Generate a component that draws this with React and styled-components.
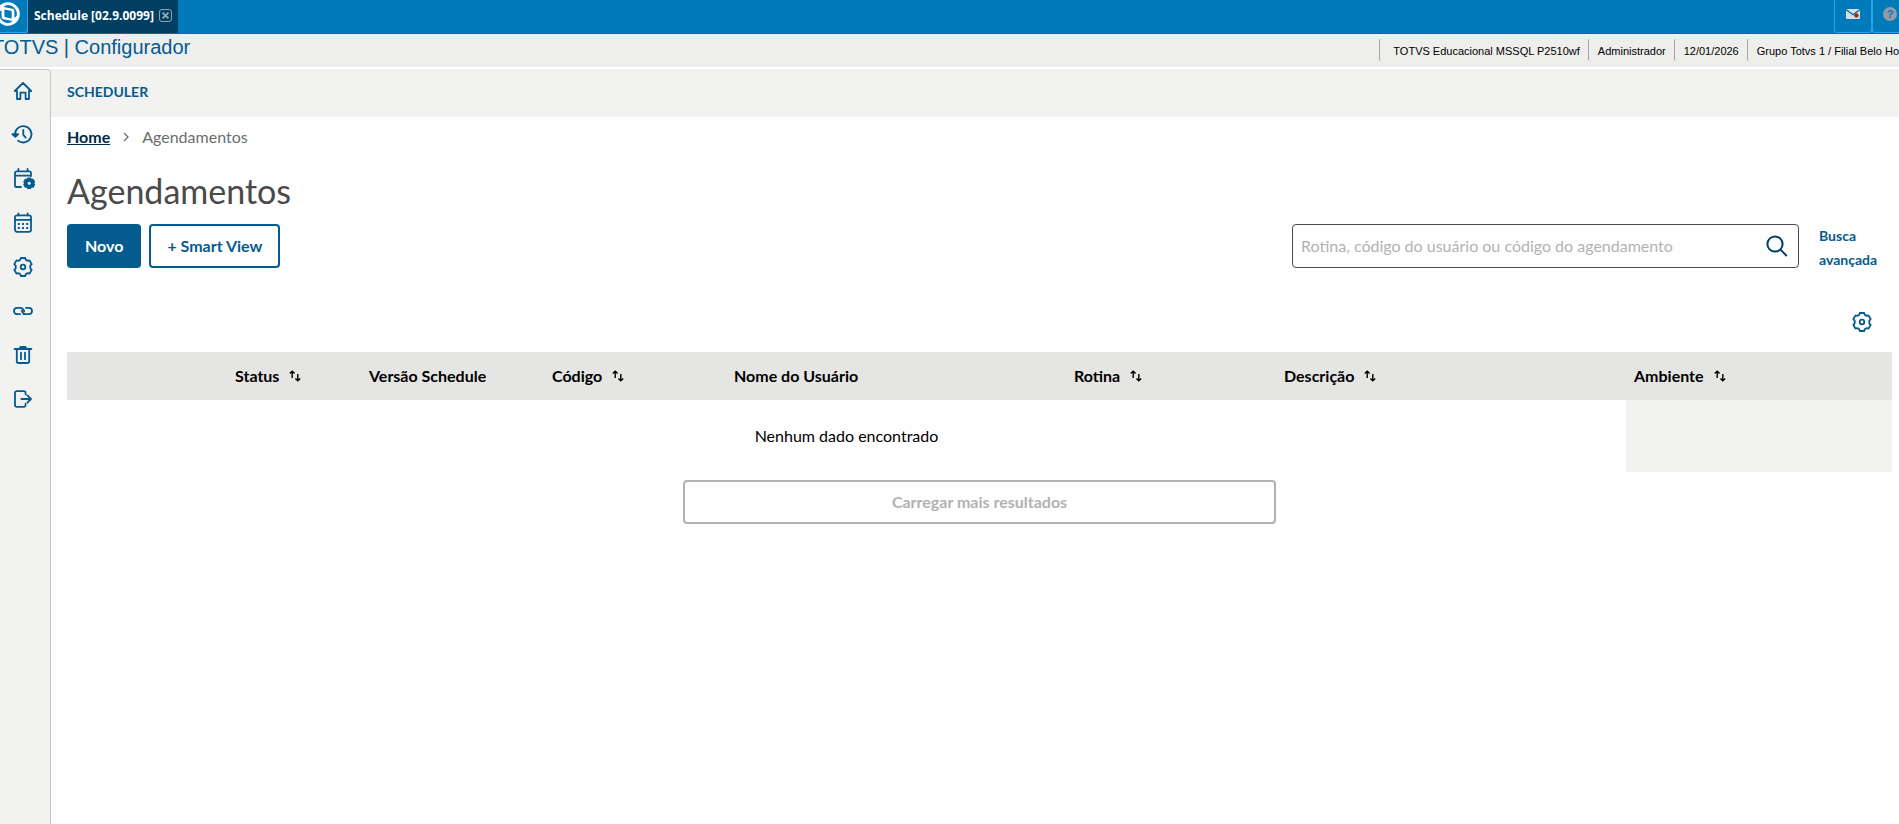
import React from "react";
import styled, { createGlobalStyle } from "styled-components";

const GEAR =
	"M7.8 1h4.4l.5 1.8 1.9 1.1 1.9-.5 2.2 3.8-1.4 1.5v2.6l1.4 1.5-2.2 3.8-1.9-.5-1.9 1.1-.5 1.8H7.8l-.5-1.8-1.9-1.1-1.9.5-2.2-3.8 1.4-1.5V8.7L1.3 7.2l2.2-3.8 1.9.5 1.9-1.1z";

const menuItems = [
	{
		label: "Home",
		icon: <path d="M1.8 10 10 2l8.2 8H16v8h-3.4v-6.4H7.4V18H4v-8z" />,
	},
	{
		label: "Histórico",
		icon: (
			<>
				<path d="M2.2 11A8.2 8.2 0 1 1 5 15.6" />
				<path d="M-.6 9.2l3 2.6 2.8-2.6z" fill="currentColor" />
				<path d="M10.3 5v4.8l2.4 2.8" />
			</>
		),
	},
	{
		label: "Agendamentos",
		icon: (
			<>
				<path d="M18 7V4a1.6 1.6 0 0 0-1.6-1.6H3.6A1.6 1.6 0 0 0 2 4v12.4A1.6 1.6 0 0 0 3.6 18H8M2 6.6h16M5.4 0v2.4M14.6 0v2.4" />
				<path
					fill="currentColor"
					strokeWidth="1.6"
					d="M14.8 9.4h2.8l.5 1.5 1.8-.4 1.4 2.4-1.1 1.3 1.1 1.4-1.4 2.4-1.8-.4-.5 1.5h-2.8l-.5-1.5-1.8.4-1.4-2.4 1.1-1.4-1.1-1.3 1.4-2.4 1.8.4z"
				/>
				<circle cx="16.2" cy="14.2" r="1.5" fill="#f2f2f0" stroke="none" />
			</>
		),
	},
	{
		label: "Calendário",
		icon: (
			<>
				<rect x="2" y="2.4" width="16" height="16.4" rx="2" />
				<path d="M2 6.8h16M5.4.4v2M14.6.4v2" />
				<path
					strokeWidth="2"
					strokeLinecap="butt"
					d="M4.8 11h2M9 11h2M13.2 11h2M4.8 15h2M9 15h2M13.2 15h2"
				/>
			</>
		),
	},
	{
		label: "Configurações",
		icon: (
			<>
				<path d={GEAR} />
				<circle cx="10" cy="10" r="2.3" />
			</>
		),
	},
	{
		label: "Vínculos",
		icon: (
			<>
				<path d="M7 13.2H4.2a3.2 3.2 0 0 1 0-6.4h3.4a3.2 3.2 0 0 1 3 2.1l.6 1.6" />
				<path d="M13 6.8h2.8a3.2 3.2 0 0 1 0 6.4h-3.4a3.2 3.2 0 0 1-3-2.1l-.6-1.6" />
			</>
		),
	},
	{
		label: "Excluir",
		icon: (
			<>
				<path d="M1.6 4h16.8M3.8 4v12.2A1.8 1.8 0 0 0 5.6 18h8.8a1.8 1.8 0 0 0 1.8-1.8V4" />
				<path d="M6.6 3.6l1.2-1.8h4.4l1.2 1.8z" fill="currentColor" />
				<path d="M8 7.6v6.6M12 7.6v6.6" />
			</>
		),
	},
	{
		label: "Sair",
		icon: (
			<>
				<path d="M12.6 5.4V4A1.8 1.8 0 0 0 10.8 2.2h-7A1.8 1.8 0 0 0 2 4v12a1.8 1.8 0 0 0 1.8 1.8h7a1.8 1.8 0 0 0 1.8-1.8v-1.4" />
				<path d="M8.4 10h9.4M14.4 6.4L18 10l-3.6 3.6" />
			</>
		),
	},
];

const columns = [
	{ label: "", width: 160 },
	{ label: "Status", width: 134, sortable: true },
	{ label: "Versão Schedule", width: 183 },
	{ label: "Código", width: 182, sortable: true },
	{ label: "Nome do Usuário", width: 340 },
	{ label: "Rotina", width: 210, sortable: true },
	{ label: "Descrição", width: 350, sortable: true },
	{ label: "Ambiente", width: 266, sortable: true },
];

function LineIcon({ children, size = 20 }) {
	return (
		<IconSvg width={size} height={size} viewBox="0 0 20 20" aria-hidden="true">
			{children}
		</IconSvg>
	);
}

function SortIcon() {
	return (
		<svg width="12" height="12" viewBox="0 0 12 12" fill="none" stroke="#000" strokeWidth="1.4" aria-hidden="true">
			<path d="M3.2 8V1.4M.8 3.6l2.4-2.4 2.4 2.4M8.8 4v6.6M6.4 8.4l2.4 2.4 2.4-2.4" />
		</svg>
	);
}

function TopBar() {
	return (
		<Bar>
			<LogoBox>
				<svg width="24" height="24" viewBox="0 0 24 24" fill="#007ab9" aria-hidden="true">
					<circle cx="12" cy="12" r="11.8" fill="#fff" />
					<path d="M8.4 7.6l6.2 1.2a1.4 1.4 0 0 1 1.1 1.4v6.2l-6.2-1.2a1.4 1.4 0 0 1-1.1-1.4z" />
					<path d="M9.4 3.4a9 9 0 0 1 11.4 9.8c-.4 1-1.4 2-2.4 2.6V9a2.2 2.2 0 0 0-1.8-2.2L7.6 5z" />
					<path d="M14.6 20.6A9 9 0 0 1 3.2 10.8c.4-1 1.4-2 2.4-2.6V15a2.2 2.2 0 0 0 1.8 2.2l9 1.8z" />
				</svg>
			</LogoBox>
			<Tab>
				Schedule [02.9.0099]
				<CloseButton aria-label="Fechar">
					<svg width="13" height="13" viewBox="0 0 13 13" fill="none" stroke="#8fa5b5" aria-hidden="true">
						<rect x=".5" y=".5" width="12" height="12" rx="2.5" />
						<path d="M3.6 3.6l5.8 5.8M9.4 3.6L3.6 9.4" strokeWidth="2" />
					</svg>
				</CloseButton>
			</Tab>
			<BarActions>
				<BarButton aria-label="Mensagens">
					<svg width="14" height="10" viewBox="0 0 14 10" aria-hidden="true">
						<rect width="14" height="10" rx="1" fill="#d5dfe7" />
						<path d="M0 .6l7 5.2L14 .6" fill="none" stroke="#1b6c9f" strokeWidth="1.3" />
						<circle cx="10.4" cy="6.4" r="2.2" fill="#8c2f16" />
					</svg>
				</BarButton>
				<BarButton $last aria-label="Ajuda">
					<HelpMark>?</HelpMark>
				</BarButton>
			</BarActions>
		</Bar>
	);
}

export default function App() {
	return (
		<Page>
			<GlobalStyle />
			<TopBar />
			<Header>
				<Product>TOTVS | Configurador</Product>
				<Session>
					<SessionItem>TOTVS Educacional MSSQL P2510wf</SessionItem>
					<SessionItem>Administrador</SessionItem>
					<SessionItem>12/01/2026</SessionItem>
					<SessionItem>Grupo Totvs 1 / Filial Belo Ho</SessionItem>
				</Session>
			</Header>
			<Body>
				<Sidebar>
					{menuItems.map((item) => (
						<MenuLink href="#" key={item.label} aria-label={item.label}>
							<LineIcon>{item.icon}</LineIcon>
						</MenuLink>
					))}
				</Sidebar>
				<Main>
					<Toolbar>SCHEDULER</Toolbar>
					<Content>
						<Breadcrumb>
							<HomeLink href="#">Home</HomeLink>
							<svg width="6" height="10" viewBox="0 0 6 10" fill="none" stroke="#6b6d6f" strokeWidth="1.3" aria-hidden="true">
								<path d="M1 1l4 4-4 4" />
							</svg>
							<span>Agendamentos</span>
						</Breadcrumb>
						<Title>Agendamentos</Title>
						<Actions>
							<Button $primary>Novo</Button>
							<Button>+ Smart View</Button>
							<Search>
								<SearchField>
									<SearchInput
										aria-label="Pesquisar"
										placeholder="Rotina, código do usuário ou código do agendamento"
									/>
									<SearchButton aria-label="Buscar">
										<svg width="24" height="24" viewBox="0 0 24 24" fill="none" stroke="#003f64" strokeWidth="2" aria-hidden="true">
											<circle cx="10" cy="10" r="7.6" />
											<path d="M15.4 15.6l6.4 6.4" />
										</svg>
									</SearchButton>
								</SearchField>
								<AdvancedLink href="#">Busca avançada</AdvancedLink>
							</Search>
						</Actions>
						<TableTools>
							<IconButton aria-label="Configurar colunas">
								<LineIcon>
									<path d={GEAR} />
									<circle cx="10" cy="10" r="2.3" />
								</LineIcon>
							</IconButton>
						</TableTools>
						<Table>
							<colgroup>
								{columns.map((column) => (
									<Col key={column.label} $width={column.width} />
								))}
							</colgroup>
							<thead>
								<tr>
									{columns.map((column) => (
										<Th key={column.label}>
											<ThContent>
												{column.label}
												{column.sortable && <SortIcon />}
											</ThContent>
										</Th>
									))}
								</tr>
							</thead>
							<tbody>
								<tr>
									<EmptyCell colSpan={7}>Nenhum dado encontrado</EmptyCell>
									<FillerCell />
								</tr>
							</tbody>
						</Table>
						<LoadMore disabled>Carregar mais resultados</LoadMore>
					</Content>
				</Main>
			</Body>
		</Page>
	);
}

const GlobalStyle = createGlobalStyle`
	* {
		box-sizing: border-box;
	}
	body {
		margin: 0;
		background: #fefefe;
		color: #000;
		font: 16px/24px Lato, "Open Sans", sans-serif;
	}
	button,
	input {
		font: inherit;
	}
	svg {
		display: block;
		flex: none;
	}
`;

const Page = styled.div`
	display: flex;
	flex-direction: column;
	min-height: 100vh;
	overflow: hidden;
`;

const Bar = styled.div`
	display: flex;
	height: 34px;
	background: #007ab9;
	border-bottom: 1px solid #006fa9;
`;

const LogoBox = styled.div`
	display: flex;
	justify-content: flex-end;
	width: 28px;
	padding: 2px 7px 0 0;
	border: solid #2ba0e6;
	border-width: 0 1px 1px 0;
	border-radius: 0 0 3px 0;
	overflow: hidden;
`;

const Tab = styled.div`
	display: flex;
	align-items: center;
	gap: 5px;
	padding: 0 6px 2px;
	background: #003f62;
	color: #fff;
	font: bold 12px/16px "Open Sans", sans-serif;
	white-space: nowrap;
`;

const CloseButton = styled.button`
	padding: 0;
	border: 0;
	background: none;
`;

const BarActions = styled.div`
	display: flex;
	margin-left: auto;
`;

const BarButton = styled.button`
	display: flex;
	align-items: center;
	justify-content: center;
	width: ${({ $last }) => ($last ? "27px" : "38px")};
	padding: ${({ $last }) => ($last ? "0 0 4px 8px" : "0 0 4px")};
	border: solid #2ba0e6;
	border-width: ${({ $last }) => ($last ? "0 0 1px 1px" : "0 1px 1px 1px")};
	border-radius: ${({ $last }) => ($last ? "0 0 0 3px" : "0 0 3px 3px")};
	background: none;
`;

const HelpMark = styled.span`
	width: 14px;
	height: 14px;
	border-radius: 50%;
	background: #8f9ca6;
	color: #007ab9;
	font: bold 11px/14px "Liberation Sans", sans-serif;
	text-align: center;
`;

const Header = styled.header`
	display: flex;
	justify-content: space-between;
	height: 35px;
	padding-bottom: 6px;
	background: #eeeeed;
	border-bottom: 2px solid #fff;
	font-family: "Liberation Sans", Arial, sans-serif;
`;

const Product = styled.div`
	margin-left: -8px;
	color: #045b8f;
	font-size: 20px;
	line-height: 26px;
	white-space: nowrap;
`;

const Session = styled.div`
	display: flex;
	padding-top: 5px;
`;

const SessionItem = styled.div`
	padding: 0 8px 0 9px;
	border-left: 1px solid #a9a2a2;
	border-radius: 2px;
	font-size: 11px;
	line-height: 24px;
	white-space: nowrap;

	&:first-child {
		padding-left: 13px;
	}
	&:last-child {
		padding-right: 0;
	}
`;

const Body = styled.div`
	display: flex;
	flex: 1;
`;

const Sidebar = styled.nav`
	flex: none;
	width: 51px;
	background: #f2f2f0;
	border: solid #c4c5c4;
	border-width: 1px 1px 0 0;
	border-radius: 0 4px 0 0;
`;

const MenuLink = styled.a`
	display: flex;
	align-items: center;
	height: 44px;
	padding: 0 0 2px 13px;
	color: #045b8f;
`;

const IconSvg = styled.svg`
	fill: none;
	stroke: currentColor;
	stroke-width: 1.8;
	stroke-linecap: round;
	stroke-linejoin: round;
	overflow: visible;
`;

const Main = styled.main`
	flex: 1;
	min-width: 0;
`;

const Toolbar = styled.div`
	padding: 0 16px 2px;
	background: #f2f2f0;
	color: #045b8f;
	font-size: 14px;
	font-weight: bold;
	line-height: 46px;
`;

const Content = styled.div`
	padding: 8px 7px 0 16px;
`;

const Breadcrumb = styled.nav`
	display: flex;
	align-items: center;
	gap: 13px;
	color: #6b6d6f;
`;

const HomeLink = styled.a`
	color: #002b45;
	font-weight: bold;
`;

const Title = styled.h1`
	margin: 22px 0 13px;
	color: #4a4a4a;
	font-size: 34px;
	font-weight: normal;
	line-height: 40px;
`;

const Actions = styled.div`
	display: flex;
	gap: 8px;
`;

const Button = styled.button`
	height: 44px;
	padding: 0 16px;
	border: 2px solid #045b8f;
	border-radius: 4px;
	background: ${({ $primary }) => ($primary ? "#045b8f" : "#fefefe")};
	color: ${({ $primary }) => ($primary ? "#fff" : "#045b8f")};
	font-weight: bold;
	white-space: nowrap;
`;

const Search = styled.div`
	display: flex;
	gap: 20px;
	flex: 0 1 600px;
	margin-left: auto;
`;

const SearchField = styled.div`
	display: flex;
	flex: 1;
	align-items: center;
	height: 44px;
	padding: 0 9px 0 8px;
	border: 1px solid #4a4a4a;
	border-radius: 4px;
`;

const SearchInput = styled.input`
	flex: 1;
	min-width: 0;
	padding: 0;
	border: 0;
	outline: 0;
	background: none;

	&::placeholder {
		color: #b2b2b2;
	}
`;

const SearchButton = styled.button`
	padding: 0;
	border: 0;
	background: none;
`;

const AdvancedLink = styled.a`
	width: 73px;
	color: #045b8f;
	font-size: 14px;
	font-weight: bold;
	text-decoration: none;
`;

const TableTools = styled.div`
	display: flex;
	justify-content: flex-end;
	margin: 28px 0 8px;
	padding-right: 8px;
`;

const IconButton = styled.button`
	display: flex;
	align-items: center;
	justify-content: center;
	width: 44px;
	height: 44px;
	padding: 0;
	border: 0;
	background: none;
	color: #045b8f;
`;

const Table = styled.table`
	width: 100%;
	border-collapse: collapse;
	table-layout: fixed;
`;

const Col = styled.col`
	width: ${({ $width }) => $width}px;
`;

const Th = styled.th`
	height: 48px;
	padding: 0 8px;
	background: #e5e5e3;
	text-align: left;
	white-space: nowrap;
`;

const ThContent = styled.div`
	display: flex;
	align-items: center;
	gap: 10px;
`;

const EmptyCell = styled.td`
	height: 72px;
	padding: 0;
	text-align: center;
`;

const FillerCell = styled.td`
	background: #f2f2f0;
`;

const LoadMore = styled.button`
	display: block;
	width: calc((100% - 48px) / 3);
	height: 44px;
	margin: 8px auto 0;
	border: 2px solid #b2b2b2;
	border-radius: 4px;
	background: #fefefe;
	color: #b2b2b2;
	font-weight: bold;
`;
